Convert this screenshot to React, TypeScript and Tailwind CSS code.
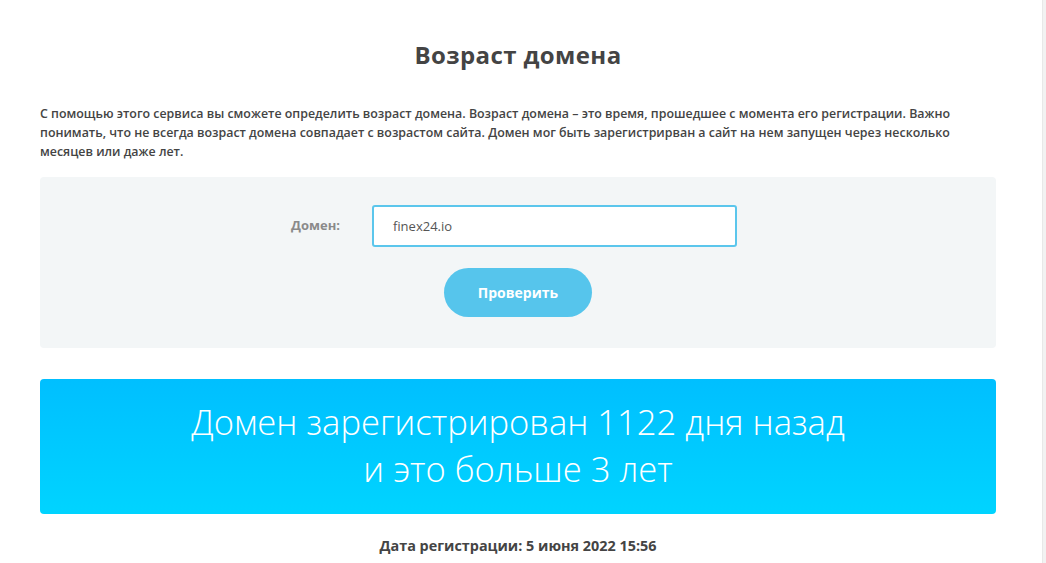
import React from "react";

export default function App() {
  return (
    <div className="flex w-[1046px] h-[563px] overflow-hidden bg-white" style={{ fontFamily: '"Open Sans", "Noto Sans", sans-serif' }}>
      <div className="flex-1 flex flex-col pl-[40px] pt-[39px]">
        <div className="w-[956px] flex flex-col">
          <h1 className="text-center text-[24px] font-bold leading-[32px] tracking-[0.4px] text-[#444]">Возраст домена</h1>
          <p className="mt-[33px] text-[12.4px] font-semibold leading-[19px] text-[#444]">
            <span className="block">С помощью этого сервиса вы сможете определить возраст домена. Возраст домена – это время, прошедшее с момента его регистрации. Важно</span>
            <span className="block">понимать, что не всегда возраст домена совпадает с возрастом сайта. Домен мог быть зарегистрирван а сайт на нем запущен через несколько</span>
            <span className="block">месяцев или даже лет.</span>
          </p>
          <div className="mt-[16px] h-[171px] rounded-[4px] bg-[#f3f6f7] flex flex-col items-center pt-[28px]">
            <div className="flex items-center gap-[32px] pr-[8px]">
              <span className="text-[13px] font-bold text-[#8a8a8a]">Домен:</span>
              <div className="w-[365px] h-[42px] rounded-[3px] border-2 border-[#5bc6ec] bg-white flex items-center pl-[19px] pt-[1px] text-[13px] text-[#555]">finex24.io</div>
            </div>
            <button className="mt-[21px] w-[148px] h-[49px] rounded-full bg-[#56c5ec] text-white text-[14px] font-bold">Проверить</button>
          </div>
          <div className="mt-[31px] h-[135px] rounded-[4px] bg-gradient-to-b from-[#00bfff] to-[#00d4ff] flex flex-col items-center justify-center pb-[4px] text-white text-[34.6px] font-light leading-[47px]">
            <span>Домен зарегистрирован 1122 дня назад</span>
            <span>и это больше 3 лет</span>
          </div>
          <div className="mt-[21px] text-center text-[14.4px] font-bold text-[#444]">Дата регистрации: 5 июня 2022 15:56</div>
        </div>
      </div>
      <div className="w-[4px] h-full bg-[#f2f2f2] border-l border-[#e8e8e8]" />
    </div>
  );
}
